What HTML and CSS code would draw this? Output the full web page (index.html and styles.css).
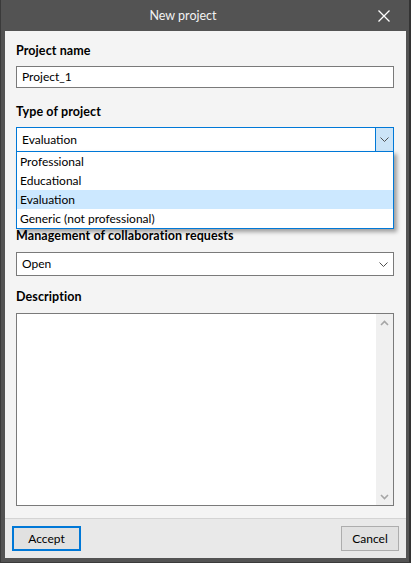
FILE: index.html
```html
<!DOCTYPE html>
<html>
<head>
<meta charset="utf-8">
<link rel="stylesheet" href="styles.css">
</head>
<body>
<div class="window">
  <div class="titlebar">
    <div class="title">New project</div>
    <div class="close">
      <svg width="12" height="12" viewBox="0 0 12 12"><path d="M0.5 0.5 L11.5 11.5 M11.5 0.5 L0.5 11.5" stroke="#ffffff" stroke-width="1.3" fill="none"/></svg>
    </div>
  </div>
  <div class="client">
    <div class="content">
      <div class="label">Project name</div>
      <div class="field input">Project_1</div>
      <div class="label l2">Type of project</div>
      <div class="combo-wrap">
        <div class="field combo focused">
          <span class="value">Evaluation</span>
          <span class="dd-btn active">
            <svg width="9" height="5" viewBox="0 0 9 5"><path d="M0.5 0.5 L4.5 4.5 L8.5 0.5" stroke="#505050" stroke-width="1" fill="none"/></svg>
          </span>
        </div>
        <ul class="list">
          <li>Professional</li>
          <li>Educational</li>
          <li class="sel">Evaluation</li>
          <li>Generic (not professional)</li>
        </ul>
      </div>
      <div class="label l3">Management of collaboration requests</div>
      <div class="field combo c2">
        <span class="value">Open</span>
        <span class="dd-btn">
          <svg width="9" height="5" viewBox="0 0 9 5"><path d="M0.5 0.5 L4.5 4.5 L8.5 0.5" stroke="#505050" stroke-width="1" fill="none"/></svg>
        </span>
      </div>
      <div class="label l4">Description</div>
      <div class="field textarea">
        <div class="scrollbar">
          <span class="arrow">
            <svg width="9" height="6" viewBox="0 0 9 6"><path d="M1 5 L4.5 1.5 L8 5" stroke="#a6a6a6" stroke-width="1.6" fill="none"/></svg>
          </span>
          <span class="arrow">
            <svg width="9" height="6" viewBox="0 0 9 6"><path d="M1 1 L4.5 4.5 L8 1" stroke="#a6a6a6" stroke-width="1.6" fill="none"/></svg>
          </span>
        </div>
      </div>
    </div>
    <div class="footer">
      <button class="btn default">Accept</button>
      <button class="btn">Cancel</button>
    </div>
  </div>
</div>
</body>
</html>
```

FILE: styles.css
```css
html, body {
  margin: 0;
  padding: 0;
  background: #535353;
}
body {
  font-family: "Lato", "Open Sans", sans-serif;
  font-size: 12px;
  color: #000;
}
.window {
  width: 411px;
  height: 563px;
  box-sizing: border-box;
  background: #535353;
  display: flex;
  flex-direction: column;
  border-left: 1px solid #3a3a3a;
  border-right: 2px solid #333333;
  border-bottom: 1px solid #3a3a3a;
  padding: 0 3px 4px 4px;
}
.titlebar {
  height: 31px;
  display: flex;
  align-items: center;
  flex: none;
}
.title {
  flex: 1;
  text-align: center;
  color: #f2f2f2;
  font-size: 12.5px;
  margin-top: -1px;
}
.close {
  width: 46px;
  display: flex;
  justify-content: center;
  align-items: center;
  margin-right: -1px;
}
.close svg { display: block; }
.client {
  flex: 1;
  display: flex;
  flex-direction: column;
  background: #f4f4f4;
}
.content {
  flex: 1;
  display: flex;
  flex-direction: column;
  padding: 12px 12px 12px 11px;
}
.label {
  font-weight: bold;
  font-size: 12.5px;
  letter-spacing: 0.1px;
  line-height: 16px;
  height: 16px;
  margin-bottom: 7px;
  white-space: nowrap;
}
.field {
  box-sizing: border-box;
  background: #fff;
  border: 1px solid #7a7a7a;
}
.input {
  height: 22px;
  line-height: 20px;
  padding-left: 5px;
  margin-bottom: 16px;
}
.l2 { margin-bottom: 7px; }
.combo-wrap {
  position: relative;
  margin-bottom: 76px;
}
.combo {
  display: flex;
  align-items: stretch;
  height: 25px;
  line-height: 23px;
}
.combo .value {
  flex: 1;
  padding-left: 5px;
}
.combo.focused {
  border-color: #0078d7;
}
.dd-btn {
  width: 17px;
  display: flex;
  align-items: center;
  justify-content: center;
}
.dd-btn svg { display: block; }
.dd-btn.active {
  background: #cce4f7;
  border-left: 1px solid #0078d7;
}
.list {
  position: absolute;
  left: 0;
  right: 0;
  top: 24px;
  margin: 0;
  padding: 0;
  list-style: none;
  background: #fff;
  border: 1px solid #0078d7;
  box-shadow: 3px 3px 4px rgba(0, 0, 0, 0.35);
  z-index: 2;
}
.list li {
  height: 19px;
  line-height: 19px;
  padding-left: 3px;
}
.list li.sel {
  background: #cce8ff;
}
.l3 { margin-bottom: 8px; }
.c2 {
  height: 24px;
  line-height: 22px;
  margin-bottom: 13px;
}
.c2 .dd-btn { width: 20px; }
.l4 { margin-bottom: 8px; }
.textarea {
  flex: 1;
  display: flex;
  justify-content: flex-end;
}
.scrollbar {
  width: 17px;
  background: #f0f0f0;
  display: flex;
  flex-direction: column;
  justify-content: space-between;
}
.arrow {
  height: 17px;
  display: flex;
  align-items: center;
  justify-content: center;
}
.arrow svg { display: block; }
.footer {
  flex: none;
  height: 40px;
  box-sizing: border-box;
  border-top: 1px solid #d4d4d4;
  background: #e9e9e9;
  display: flex;
  justify-content: space-between;
  align-items: flex-start;
  padding: 7px 7px 0 7px;
}
.btn {
  font-family: inherit;
  font-size: 12px;
  height: 25px;
  width: 58px;
  background: #e1e1e1;
  border: 1px solid #adadad;
  padding: 0;
  color: #000;
}
.btn.default {
  width: 69px;
  border: 2px solid #0078d7;
}
```
